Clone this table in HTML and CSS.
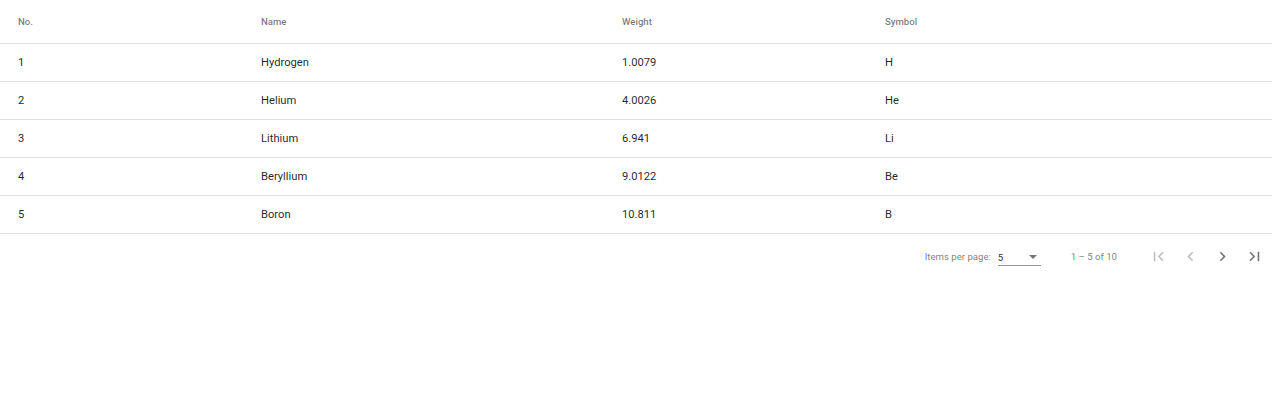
FILE: index.html
```html
<!DOCTYPE html>
<html lang="en">
<head>
  <meta charset="UTF-8" />
  <title>Elements</title>
  <link rel="stylesheet" href="styles.css">
</head>
<body>
  <div class="table-wrap">
    <table class="elements">
      <colgroup>
        <col class="col-no">
        <col class="col-name">
        <col class="col-weight">
        <col class="col-symbol">
      </colgroup>
      <thead>
        <tr class="header-row">
          <th>No.</th>
          <th>Name</th>
          <th>Weight</th>
          <th>Symbol</th>
        </tr>
      </thead>
      <tbody>
        <tr><td>1</td><td>Hydrogen</td><td>1.0079</td><td>H</td></tr>
        <tr><td>2</td><td>Helium</td><td>4.0026</td><td>He</td></tr>
        <tr><td>3</td><td>Lithium</td><td>6.941</td><td>Li</td></tr>
        <tr><td>4</td><td>Beryllium</td><td>9.0122</td><td>Be</td></tr>
        <tr><td>5</td><td>Boron</td><td>10.811</td><td>B</td></tr>
      </tbody>
    </table>

    <div class="paginator">
      <span class="page-size-label">Items per page:</span>
      <div class="page-size-select">
        <span class="value">5</span>
        <span class="arrow"></span>
      </div>
      <span class="range-label">1 – 5 of 10</span>
      <div class="nav">
        <button class="nav-btn disabled" aria-label="First page">
          <svg viewBox="0 0 24 24"><path d="M18.41 16.59L13.82 12l4.59-4.59L17 6l-6 6 6 6zM6 6h2v12H6z"/></svg>
        </button>
        <button class="nav-btn disabled" aria-label="Previous page">
          <svg viewBox="0 0 24 24"><path d="M15.41 7.41L14 6l-6 6 6 6 1.41-1.41L10.83 12z"/></svg>
        </button>
        <button class="nav-btn" aria-label="Next page">
          <svg viewBox="0 0 24 24"><path d="M10 6L8.59 7.41 13.17 12l-4.58 4.59L10 18l6-6z"/></svg>
        </button>
        <button class="nav-btn" aria-label="Last page">
          <svg viewBox="0 0 24 24"><path d="M5.59 7.41L10.18 12l-4.59 4.59L7 18l6-6-6-6zM16 6h2v12h-2z"/></svg>
        </button>
      </div>
    </div>
  </div>
</body>
</html>
```

FILE: styles.css
```css
body {
  margin: 0;
  font-family: Roboto, "Helvetica Neue", sans-serif;
  background: #fff;
  color: rgba(0,0,0,0.87);
}
.elements {
  width: 100%;
  border-collapse: collapse;
  table-layout: fixed;
}
.col-no { width: 261px; }
.col-name { width: 361px; }
.col-weight { width: 263px; }
.elements th,
.elements td {
  text-align: left;
  padding: 0;
  border-bottom: 1px solid #e0e0e0;
}
.elements th:first-child,
.elements td:first-child {
  padding-left: 18px;
}
.elements th {
  height: 43px;
  font-size: 9.6px;
  font-weight: 500;
  color: rgba(0,0,0,0.54);
}
.elements td {
  height: 37px;
  font-size: 11.2px;
  color: rgba(0,0,0,0.87);
}
.paginator {
  display: flex;
  justify-content: flex-end;
  align-items: center;
  height: 45px;
  padding-right: 2px;
  font-size: 9.6px;
  color: rgba(0,0,0,0.54);
}
.page-size-label {
  margin-right: 7px;
}
.page-size-select {
  display: flex;
  align-items: center;
  justify-content: space-between;
  width: 43px;
  height: 16px;
  margin-top: 2px;
  border-bottom: 1px solid rgba(0,0,0,0.42);
  color: rgba(0,0,0,0.87);
}
.page-size-select .arrow {
  width: 0;
  height: 0;
  margin-right: 4px;
  border-left: 4px solid transparent;
  border-right: 4px solid transparent;
  border-top: 4px solid rgba(0,0,0,0.54);
}
.range-label {
  margin-left: 30px;
  margin-right: 25px;
}
.nav {
  display: flex;
}
.nav-btn {
  width: 32px;
  height: 32px;
  padding: 0;
  border: none;
  background: none;
  display: flex;
  align-items: center;
  justify-content: center;
  cursor: pointer;
}
.nav-btn svg {
  width: 19px;
  height: 19px;
  fill: rgba(0,0,0,0.54);
}
.nav-btn.disabled svg {
  fill: rgba(0,0,0,0.26);
}
```
